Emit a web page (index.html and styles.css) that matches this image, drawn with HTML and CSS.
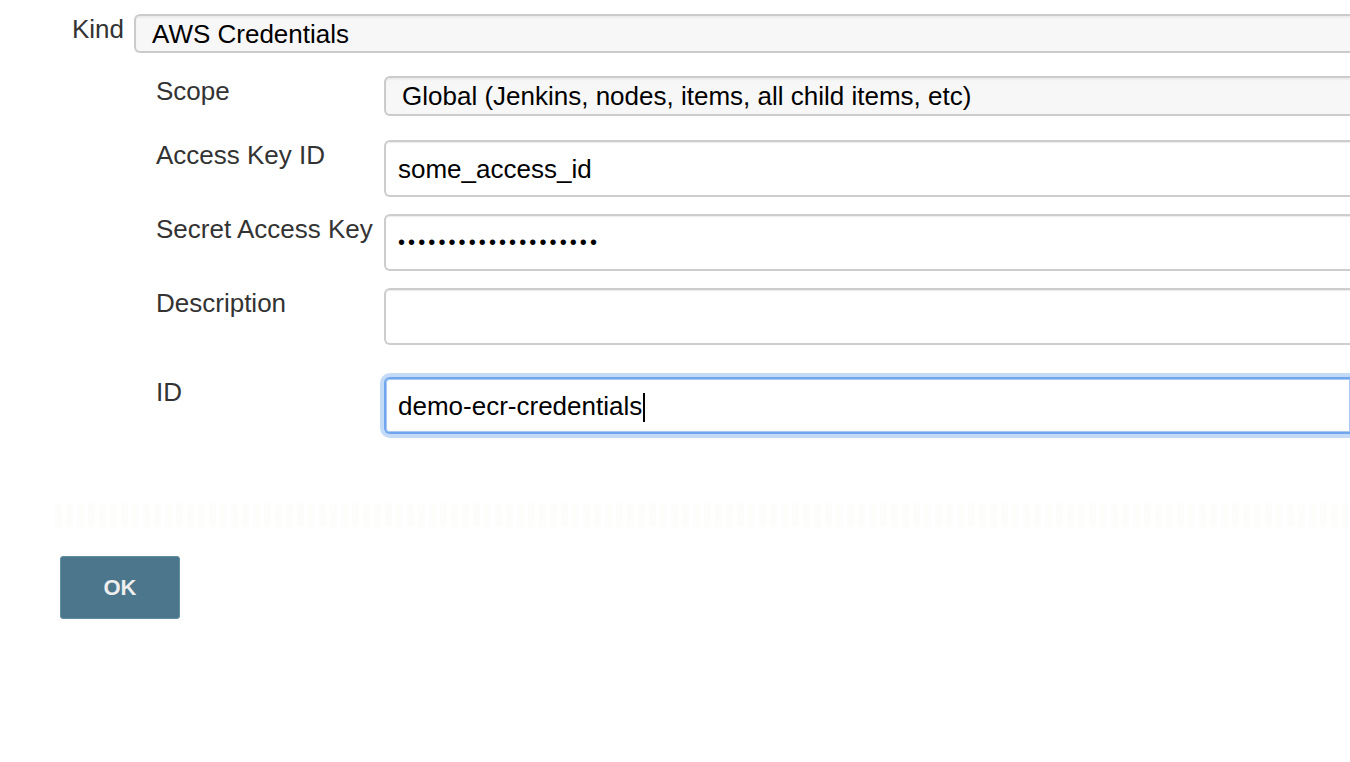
FILE: index.html
```html
<!DOCTYPE html>
<html lang="en">
<head>
<meta charset="utf-8">
<title>AWS Credentials</title>
<link rel="stylesheet" href="styles.css">
</head>
<body>
<div class="page">
  <div class="kind-row">
    <div class="kind-label">Kind</div>
    <div class="select">AWS Credentials</div>
  </div>
  <div class="fields">
    <div class="label">Scope</div>
    <div class="select">Global (Jenkins, nodes, items, all child items, etc)</div>

    <div class="label gap-a">Access Key ID</div>
    <div class="input gap-a">some_access_id</div>

    <div class="label">Secret Access Key</div>
    <div class="input"><span class="dots">••••••••••••••••••••</span></div>

    <div class="label">Description</div>
    <div class="input"></div>

    <div class="label gap-b">ID</div>
    <div class="input focused gap-b">demo-ecr-credentials<span class="caret"></span></div>
  </div>
  <div class="divider"></div>
  <button class="ok" type="button">OK</button>
</div>
</body>
</html>
```

FILE: styles.css
```css
html, body {
  margin: 0;
  padding: 0;
  background: #ffffff;
  overflow: hidden;
}

.page {
  width: 100%;
  font-family: "Liberation Sans", Arial, Helvetica, sans-serif;
  font-size: 26px;
  line-height: 30px;
  color: #000;
}

.kind-row {
  display: flex;
  align-items: flex-start;
  padding-top: 14px;
  padding-left: 72px;
}

.kind-label {
  width: 62px;
  flex: none;
  color: #333;
}

.select {
  flex: 1;
  min-width: 0;
  box-sizing: border-box;
  height: 39px;
  padding: 3px 16px 2px;
  border: 2px solid #cbcbcb;
  border-right: 0;
  border-radius: 6px 0 0 6px;
  background: #f7f7f7;
  box-shadow: inset 0 2px 1px #ececec;
  white-space: nowrap;
  overflow: hidden;
}

.fields {
  display: grid;
  grid-template-columns: 228px minmax(0, 1fr);
  row-gap: 17px;
  margin-left: 156px;
  margin-top: 23px;
}

.fields .select {
  height: 40px;
  padding-top: 3px;
}

.label {
  color: #333;
  white-space: nowrap;
}

.gap-a {
  margin-top: 7px;
}

.gap-b {
  margin-top: 15px;
}

.input {
  box-sizing: border-box;
  height: 57px;
  padding: 12px 12px 11px;
  border: 2px solid #cdcdcd;
  border-right: 0;
  border-radius: 6px 0 0 6px;
  background: #fff;
  box-shadow: inset 0 1px 1px #ececec;
  white-space: nowrap;
  overflow: hidden;
}

.dots {
  font-size: 20px;
  letter-spacing: 3.1px;
  position: relative;
  top: -3px;
}

.input.focused {
  border-color: #6fa6ee;
  box-shadow: 0 0 0 4px #c4dbf8, inset 0 0 0 1px #a9c9f3;
  overflow: visible;
}

.caret {
  display: inline-block;
  width: 2px;
  height: 29px;
  background: #000;
  vertical-align: -7px;
  margin-left: 1px;
}

.divider {
  margin-top: 69px;
  margin-left: 55px;
  height: 24px;
  background:
    repeating-linear-gradient(90deg, rgba(240, 238, 225, 0.14) 0 7px, transparent 7px 11px);
}

.ok {
  display: block;
  margin-top: 29px;
  margin-left: 60px;
  width: 120px;
  height: 63px;
  padding: 0;
  border: 1px solid #5d8ca3;
  border-radius: 3px;
  background: #4b768b;
  color: #eeeeee;
  font-family: "Liberation Sans", Arial, Helvetica, sans-serif;
  font-weight: bold;
  font-size: 22px;
  cursor: pointer;
}
```
